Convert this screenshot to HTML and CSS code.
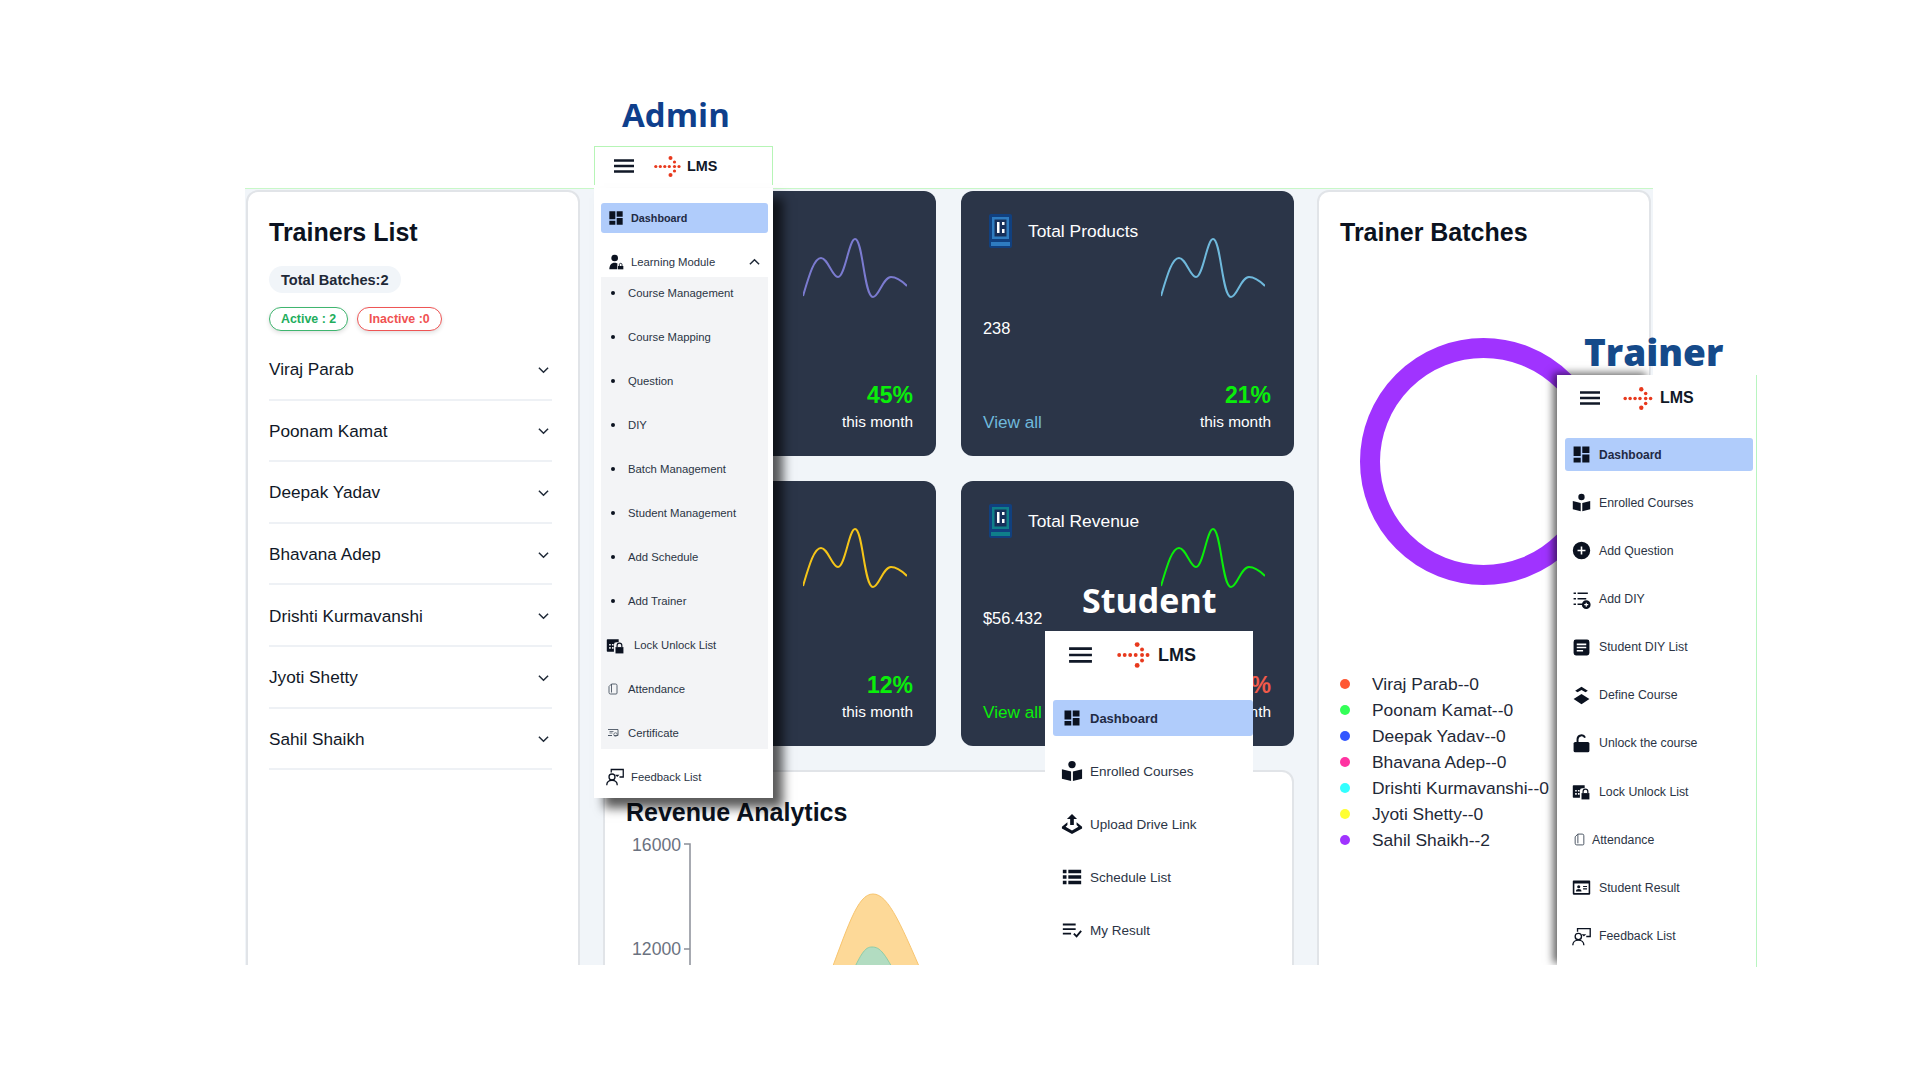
FILE: index.html
```html
<!DOCTYPE html>
<html lang="en">
  <head>
    <meta charset="UTF-8" />
    <title>LMS</title>
    <link rel="stylesheet" href="styles.css">
  </head>
  <body>
    <svg class="defs" width="0" height="0">
      <symbol id="i-dash" viewBox="0 0 24 24"><path d="M2 2h9v12H2zM13 2h9v8h-9zM13 12h9v10h-9zM2 16h9v6H2z"/></symbol>
      <symbol id="i-book" viewBox="0 0 24 24"><circle cx="12" cy="5" r="4"/><path d="M1 10l10 2.500V23L1 20.500zM23 10l-10 2.500V23l10-2.500z"/></symbol>
      <symbol id="i-plus" viewBox="0 0 24 24"><path fill-rule="evenodd" d="M12 1a11 11 0 1 0 0 22 11 11 0 0 0 0-22zM11 7h2v4h4v2h-4v4h-2v-4H7v-2h4z"/></symbol>
      <symbol id="i-listplus" viewBox="0 0 24 24"><path d="M2 3h3v2H2zM7 3h13v2H7zM2 10h3v2H2zM7 10h11v2H7zM2 17h3v2H2zM7 17h6v2H7z"/><path fill-rule="evenodd" d="M18 13a5.500 5.500 0 1 0 0 11 5.500 5.500 0 0 0 0-11zM17.300 16h1.400v1.800h1.800v1.400h-1.800V21h-1.400v-1.800h-1.800v-1.400h1.800z"/></symbol>
      <symbol id="i-note" viewBox="0 0 24 24"><path fill-rule="evenodd" d="M5 2h14a3 3 0 0 1 3 3v14a3 3 0 0 1-3 3H5a3 3 0 0 1-3-3V5a3 3 0 0 1 3-3zM6 7v2h12V7zM6 11v2h12v-2zM6 15v2h8v-2z"/></symbol>
      <symbol id="i-layers" viewBox="0 0 24 24"><path d="M12 1l8 5-3 2-5-3-5 3-3-2zM12 10l10 6.500L12 23 2 16.500z"/></symbol>
      <symbol id="i-unlock" viewBox="0 0 24 24"><path d="M4 10h16a2 2 0 0 1 2 2v9a2 2 0 0 1-2 2H4a2 2 0 0 1-2-2v-9a2 2 0 0 1 2-2z"/><path d="M7 11V6.500a5 5 0 0 1 9.500-2" fill="none" stroke="currentColor" stroke-width="2.500"/></symbol>
      <symbol id="i-callock" viewBox="0 0 24 24"><path fill-rule="evenodd" d="M2 4h14v4h-3a3 3 0 0 0-3 3v9H2a1 1 0 0 1-1-1V5a1 1 0 0 1 1-1zM4 10v2h2v-2zM7.500 10v2h2v-2zM4 14v2h2v-2zM7.500 14v2h2v-2z"/><path d="M12 14h10v8H12z"/><path d="M14 14v-2a3 3 0 0 1 6 0v2" fill="none" stroke="currentColor" stroke-width="1.500"/></symbol>
      <symbol id="i-file" viewBox="0 0 24 24"><path d="M9 2h8a3 3 0 0 1 3 3v15a2 2 0 0 1-2 2H7a3 3 0 0 1-3-3V7zM9 2v17" fill="none" stroke="currentColor" stroke-width="1.800"/></symbol>
      <symbol id="i-cert" viewBox="0 0 24 24"><path d="M2 5h20v12h-8M10 17H2z" fill="none" stroke="currentColor" stroke-width="1.800"/><path d="M5 9h8M5 12h6" stroke="currentColor" stroke-width="1.500"/><circle cx="17" cy="15" r="3.500" fill="none" stroke="currentColor" stroke-width="1.500"/></symbol>
      <symbol id="i-idcard" viewBox="0 0 24 24"><path fill-rule="evenodd" d="M2 3h20a1 1 0 0 1 1 1v16a1 1 0 0 1-1 1H2a1 1 0 0 1-1-1V4a1 1 0 0 1 1-1zM3 7v12h18V7zM8.500 9a2 2 0 1 1 0 4 2 2 0 0 1 0-4zM5 17c0-2 1.500-3 3.500-3s3.500 1 3.500 3zM14 10h5v1.500h-5zM14 13h5v1.500h-5z"/></symbol>
      <symbol id="i-feedback" viewBox="0 0 24 24"><g fill="none" stroke="currentColor" stroke-width="1.700"><circle cx="8" cy="12" r="4"/><path d="M1 23c0-4 3-6.500 7-6.500s7 2.500 7 6.500M7 6V2h16v10h-5"/></g><path d="M12 9h6l-3 3z"/></symbol>
      <symbol id="i-upload" viewBox="0 0 24 24"><path d="M12 1l5.500 5.500H14V13h-4V6.500H6.500z"/><path d="M7 10L1 15v2l11 6 11-6v-2l-6-5v3l2 2-7 4-7-4 2-2z"/></symbol>
      <symbol id="i-rows" viewBox="0 0 24 24"><path d="M2 4h4v4H2zM8 4h14v4H8zM2 10h4v4H2zM8 10h14v4H8zM2 16h4v4H2zM8 16h14v4H8z"/></symbol>
      <symbol id="i-result" viewBox="0 0 24 24"><path d="M2 5h14v2H2zM2 10h14v2H2zM2 15h9v2H2z"/><path d="M14 16l3 3 5-6" fill="none" stroke="currentColor" stroke-width="2"/></symbol>
      <symbol id="i-learn" viewBox="0 0 24 24"><circle cx="10" cy="6" r="5"/><path d="M2 23c0-6 3-10 8-10 2 0 3 .5 4 1v9z"/><path d="M15 18h8v5h-8z"/><path d="M17 18v-2a2 2 0 0 1 4 0v2" fill="none" stroke="currentColor" stroke-width="1.300"/></symbol>
      <symbol id="i-logo" viewBox="0 0 27 21"><g fill="#e8391d"><circle cx="1.800" cy="10.500" r="1.600"/><circle cx="6.300" cy="10.500" r="1.600"/><circle cx="10.800" cy="10.500" r="1.600"/><circle cx="15.300" cy="10.500" r="1.600"/><circle cx="20.500" cy="10.500" r="1.600"/><circle cx="25" cy="10.500" r="1.600"/><circle cx="16.500" cy="2" r="2"/><circle cx="20.500" cy="6" r="1.600"/><circle cx="20.500" cy="15" r="1.600"/><circle cx="16.500" cy="19" r="2"/></g></symbol>
      <symbol id="i-device" viewBox="0 0 23 34"><rect width="23" height="34" rx="2" fill="#11407f"/><rect x="3" y="3" width="17" height="22" fill="currentColor"/><rect x="5.500" y="5.500" width="12" height="17" fill="#17305a"/><path d="M8 8h2.500v11H8zM13 15h2.500v4H13zM13 8h2.500v3H13z" fill="#fff"/><rect x="2" y="28" width="19" height="4" fill="currentColor"/></symbol>
      <symbol id="i-spark" viewBox="0 0 104 60"><path d="M0 58C6 38 11 20 18 20C25 20 29 39 35 39C42 39 46 1 52 1C60 1 61 59 70 59C76 59 80 39 88 39C93 39 99 43 104 48" fill="none" stroke="currentColor" stroke-width="2"/></symbol>
    </svg>

    <div class="stage">
      <div class="dash">
        <section class="panel trainers">
          <h2>Trainers List</h2>
          <div class="total">Total Batches:2</div>
          <div class="chips">
            <span class="chip active">Active : 2</span>
            <span class="chip inactive">Inactive :0</span>
          </div>
          <ul class="accordion">
            <li>Viraj Parab <svg class="chev" viewBox="0 0 12 8"><path d="M1 1.500l5 5 5-5"/></svg></li>
            <li>Poonam Kamat <svg class="chev" viewBox="0 0 12 8"><path d="M1 1.500l5 5 5-5"/></svg></li>
            <li>Deepak Yadav <svg class="chev" viewBox="0 0 12 8"><path d="M1 1.500l5 5 5-5"/></svg></li>
            <li>Bhavana Adep <svg class="chev" viewBox="0 0 12 8"><path d="M1 1.500l5 5 5-5"/></svg></li>
            <li>Drishti Kurmavanshi <svg class="chev" viewBox="0 0 12 8"><path d="M1 1.500l5 5 5-5"/></svg></li>
            <li>Jyoti Shetty <svg class="chev" viewBox="0 0 12 8"><path d="M1 1.500l5 5 5-5"/></svg></li>
            <li>Sahil Shaikh <svg class="chev" viewBox="0 0 12 8"><path d="M1 1.500l5 5 5-5"/></svg></li>
          </ul>
        </section>

        <div class="middle">
          <div class="cards">
            <div class="card">
              <div class="cardTop">
                <div class="cardHead"></div>
                <svg class="spark purple"><use href="#i-spark"/></svg>
              </div>
              <div class="cardBottom">
                <span></span>
                <div class="change"><b class="up">45%</b><span>this month</span></div>
              </div>
            </div>
            <div class="card">
              <div class="cardTop">
                <div class="cardHead"><svg class="device blue"><use href="#i-device"/></svg><span>Total Products</span></div>
                <svg class="spark sky"><use href="#i-spark"/></svg>
              </div>
              <div class="value">238</div>
              <div class="cardBottom">
                <a class="sky">View all</a>
                <div class="change"><b class="up">21%</b><span>this month</span></div>
              </div>
            </div>
            <div class="card">
              <div class="cardTop">
                <div class="cardHead"></div>
                <svg class="spark yellow"><use href="#i-spark"/></svg>
              </div>
              <div class="cardBottom">
                <span></span>
                <div class="change"><b class="up">12%</b><span>this month</span></div>
              </div>
            </div>
            <div class="card">
              <div class="cardTop">
                <div class="cardHead"><svg class="device teal"><use href="#i-device"/></svg><span>Total Revenue</span></div>
                <svg class="spark lime"><use href="#i-spark"/></svg>
              </div>
              <div class="value">$56.432</div>
              <div class="cardBottom">
                <a class="lime">View all</a>
                <div class="change"><b class="down">%</b><span>this month</span></div>
              </div>
            </div>
          </div>

          <section class="panel revenue">
            <h2>Revenue Analytics</h2>
            <svg class="chart" width="670" height="200">
              <path class="areaOrange" d="M215 160C238 100 247 67 263 67C279 67 292 100 318 160Z"/>
              <path class="areaGreen" d="M236 160C251 125 255 120 262 120C270 120 275 125 292 160Z"/>
              <path class="axis" d="M74 17H80V200M74 122H80"/>
              <text x="71" y="24" text-anchor="end">16000</text>
              <text x="71" y="128" text-anchor="end">12000</text>
            </svg>
          </section>
        </div>

        <section class="panel batches">
          <h2>Trainer Batches</h2>
          <div class="donut"></div>
          <ul class="legend">
            <li><i class="dot c1"></i>Viraj Parab--0</li>
            <li><i class="dot c2"></i>Poonam Kamat--0</li>
            <li><i class="dot c3"></i>Deepak Yadav--0</li>
            <li><i class="dot c4"></i>Bhavana Adep--0</li>
            <li><i class="dot c5"></i>Drishti Kurmavanshi--0</li>
            <li><i class="dot c6"></i>Jyoti Shetty--0</li>
            <li><i class="dot c7"></i>Sahil Shaikh--2</li>
          </ul>
        </section>
      </div>

      <div class="label labelAdmin">Admin</div>
      <aside class="side admin">
        <div class="sideHead">
          <svg class="burger" viewBox="0 0 20 14"><path d="M0 1.500h20M0 7h20M0 12.500h20"/></svg>
          <svg class="logo"><use href="#i-logo"/></svg>
          <b>LMS</b>
        </div>
        <a class="item current"><svg class="ico"><use href="#i-dash"/></svg>Dashboard</a>
        <a class="item group"><svg class="ico"><use href="#i-learn"/></svg>Learning Module<svg class="chevUp" viewBox="0 0 12 8"><path d="M1 6.500l5-5 5 5"/></svg></a>
        <div class="sub">
          <a class="item bullet">Course Management</a>
          <a class="item bullet">Course Mapping</a>
          <a class="item bullet">Question</a>
          <a class="item bullet">DIY</a>
          <a class="item bullet">Batch Management</a>
          <a class="item bullet">Student Management</a>
          <a class="item bullet">Add Schedule</a>
          <a class="item bullet">Add Trainer</a>
          <a class="item lockRow"><svg class="ico"><use href="#i-callock"/></svg>Lock Unlock List</a>
          <a class="item smallRow"><svg class="ico"><use href="#i-file"/></svg>Attendance</a>
          <a class="item smallRow"><svg class="ico"><use href="#i-cert"/></svg>Certificate</a>
        </div>
        <a class="item feedback"><svg class="ico"><use href="#i-feedback"/></svg>Feedback List</a>
      </aside>

      <aside class="side student">
        <div class="sideHead">
          <svg class="burger" viewBox="0 0 20 14"><path d="M0 1.500h20M0 7h20M0 12.500h20"/></svg>
          <svg class="logo"><use href="#i-logo"/></svg>
          <b>LMS</b>
        </div>
        <a class="item current"><svg class="ico"><use href="#i-dash"/></svg>Dashboard</a>
        <a class="item"><svg class="ico"><use href="#i-book"/></svg>Enrolled Courses</a>
        <a class="item"><svg class="ico"><use href="#i-upload"/></svg>Upload Drive Link</a>
        <a class="item"><svg class="ico"><use href="#i-rows"/></svg>Schedule List</a>
        <a class="item"><svg class="ico"><use href="#i-result"/></svg>My Result</a>
      </aside>
      <div class="label labelStudent">Student</div>

      <aside class="side trainer">
        <div class="sideHead">
          <svg class="burger" viewBox="0 0 20 14"><path d="M0 1.500h20M0 7h20M0 12.500h20"/></svg>
          <svg class="logo"><use href="#i-logo"/></svg>
          <b>LMS</b>
        </div>
        <a class="item current"><svg class="ico"><use href="#i-dash"/></svg>Dashboard</a>
        <a class="item"><svg class="ico"><use href="#i-book"/></svg>Enrolled Courses</a>
        <a class="item"><svg class="ico"><use href="#i-plus"/></svg>Add Question</a>
        <a class="item"><svg class="ico"><use href="#i-listplus"/></svg>Add DIY</a>
        <a class="item"><svg class="ico"><use href="#i-note"/></svg>Student DIY List</a>
        <a class="item"><svg class="ico"><use href="#i-layers"/></svg>Define Course</a>
        <a class="item"><svg class="ico"><use href="#i-unlock"/></svg>Unlock the course</a>
        <a class="item"><svg class="ico"><use href="#i-callock"/></svg>Lock Unlock List</a>
        <a class="item narrow"><svg class="ico"><use href="#i-file"/></svg>Attendance</a>
        <a class="item"><svg class="ico"><use href="#i-idcard"/></svg>Student Result</a>
        <a class="item"><svg class="ico"><use href="#i-feedback"/></svg>Feedback List</a>
      </aside>
      <div class="label labelTrainer">Trainer</div>
    </div>
  </body>
</html>
```

FILE: styles.css
```css
* {
  box-sizing: border-box;
}

body {
  margin: 0;
  background: #fff;
  font-family: "Liberation Sans", Arial, sans-serif;
  color: #111827;
}

h2 {
  margin: 0;
  font-size: 25px;
  line-height: 30px;
  font-weight: 700;
  color: #0b1220;
}

ul {
  list-style: none;
  margin: 0;
  padding: 0;
}

.defs {
  position: absolute;
}

.stage {
  position: relative;
  width: 1920px;
  height: 1080px;
  overflow: hidden;
}

/* base dashboard */
.dash {
  display: grid;
  grid-template-columns: 334px 691px 334px;
  column-gap: 23px;
  margin: 188px 0 0 245px;
  width: 1408px;
  height: 777px;
  padding: 1px 0 0 1px;
  overflow: hidden;
  background: #f1f5f9;
  border-top: 1px solid #c8f8c8;
}

.panel {
  background: #fff;
  border: 2px solid #e1e4e8;
  border-radius: 12px;
}

.trainers {
  padding: 25px 26px 0 21px;
}

.total {
  display: inline-block;
  margin-top: 19px;
  padding: 0 12px;
  height: 27px;
  line-height: 28px;
  border-radius: 14px;
  background: #f1f5f9;
  font-size: 14.6px;
  font-weight: 700;
  color: #1f2937;
}

.chips {
  display: flex;
  gap: 9px;
  margin-top: 14px;
}

.chip {
  padding: 0 11px;
  height: 24px;
  line-height: 23px;
  border-radius: 12px;
  font-size: 12.4px;
  font-weight: 700;
  background: #fff;
  box-shadow: 0 2px 4px rgba(0, 0, 0, 0.12);
}

.chip.active {
  border: 1px solid #3fb56f;
  color: #22ad5c;
}

.chip.inactive {
  border: 1px solid #ee5555;
  color: #f05252;
}

.accordion {
  margin-top: 8px;
}

.accordion li {
  display: flex;
  align-items: center;
  justify-content: space-between;
  height: 61.6px;
  padding: 2px 3px 0 0;
  border-bottom: 2px solid #eef1f5;
  font-size: 17.2px;
  color: #111827;
}

.chev,
.chevUp {
  width: 11px;
  height: 8px;
  fill: none;
  stroke: #1f2937;
  stroke-width: 1.6;
}

.middle {
  display: flex;
  flex-direction: column;
  gap: 24px;
  padding-top: 1px;
}

.cards {
  display: grid;
  grid-template-columns: 333px 333px;
  grid-template-rows: 265px 265px;
  gap: 25px;
}

.card {
  display: flex;
  flex-direction: column;
  padding: 23px 23px 24px 22px;
  background: #2b3548;
  border-radius: 12px;
  color: #fff;
}

.cardTop {
  display: flex;
  justify-content: space-between;
}

.cardHead {
  display: flex;
  gap: 16px;
  padding-left: 6px;
  font-size: 17.4px;
  line-height: 34px;
}

.device {
  width: 23px;
  height: 34px;
}

.device.blue {
  color: #2f7cc0;
}

.device.teal {
  color: #0f7f8a;
}

.spark {
  width: 104px;
  height: 60px;
  margin: 24px 6px 0 0;
}

.purple { color: #7b7bd0; }
.sky { color: #6fb9dc; }
.yellow { color: #f5c518; }
.lime { color: #0aee0a; }

.value {
  margin-top: 20px;
  font-size: 16.4px;
  line-height: 20px;
}

.cardBottom {
  display: flex;
  justify-content: space-between;
  align-items: flex-end;
  margin-top: auto;
  font-size: 15.4px;
}

.cardBottom a {
  font-size: 17.2px;
  line-height: 20px;
}

.change {
  display: flex;
  flex-direction: column;
  align-items: flex-end;
  gap: 4px;
  line-height: 20px;
}

.change b {
  font-size: 23px;
  line-height: 26px;
}

.up { color: #0aee0a; }
.down { color: #f25a4a; }

.revenue {
  height: 260px;
  padding: 25px 0 0 21px;
}

.chart {
  display: block;
  margin-left: -16px;
}

.chart text {
  font-size: 17.6px;
  fill: #6b7280;
}

.axis {
  fill: none;
  stroke: #8a8f98;
  stroke-width: 1.5;
}

.areaOrange {
  fill: #fdd998;
  stroke: #f8c56f;
}

.areaGreen {
  fill: #b2dcc1;
  stroke: #8fcda8;
}

.batches {
  padding: 25px 0 0 21px;
}

.donut {
  width: 247px;
  height: 247px;
  margin: 91px 0 0 20px;
  border: 20px solid #a033ff;
  border-radius: 50%;
}

.legend {
  margin-top: 86px;
}

.legend li {
  display: flex;
  align-items: center;
  gap: 22px;
  height: 26px;
  font-size: 17.4px;
  color: #1f2937;
}

.dot {
  width: 10px;
  height: 10px;
  border-radius: 50%;
}

.c1 { background: #ff5733; }
.c2 { background: #33ff57; }
.c3 { background: #3357ff; }
.c4 { background: #ff33a1; }
.c5 { background: #33ffff; }
.c6 { background: #ffff33; }
.c7 { background: #a033ff; }

/* floating labels */
.label {
  position: absolute;
  z-index: 2;
  font-family: "Open Sans", sans-serif;
  font-size: 34px;
  line-height: 44px;
  font-weight: 700;
}

.labelAdmin {
  left: 622px;
  top: 93px;
  font-size: 33px;
  color: #0f3f8c;
}

.labelStudent {
  left: 1082px;
  top: 578px;
  color: #fff;
}

.labelTrainer {
  left: 1584px;
  top: 330px;
  font-size: 37px;
  color: #154a8a;
  font-weight: 800;
}

/* floating sidebars */
.side {
  position: absolute;
  z-index: 1;
  display: flex;
  flex-direction: column;
  background: #fff;
}

.side::before {
  content: "";
  position: absolute;
  z-index: -1;
}

.sideHead {
  display: flex;
  align-items: center;
  flex: none;
}

.sideHead b {
  color: #111827;
}

.burger {
  fill: none;
  stroke: #111827;
  stroke-width: 2.4;
}

.item {
  display: flex;
  align-items: center;
  flex: none;
  color: #2b3445;
}

.item.current {
  background: #b0ccfb;
  border-radius: 3px;
  font-weight: 700;
  color: #1f2a44;
}

.ico {
  flex: none;
  fill: currentColor;
}

.item .ico {
  color: #0b1220;
}

/* admin */
.admin {
  left: 594px;
  top: 146px;
  width: 179px;
  height: 652px;
  padding: 0 5px 0 7px;
}

.admin::before {
  top: 42px;
  left: 0;
  right: 0;
  bottom: 0;
  box-shadow: 10px 10px 10px rgba(0, 0, 0, 0.65);
}

.admin .sideHead {
  height: 39px;
  margin: 0 -5px 0 -7px;
  padding-left: 19px;
  border: 1px solid #b6f5b6;
  border-bottom: 0;
}

.admin .burger {
  width: 20px;
  height: 14px;
  margin-right: 20px;
}

.admin .logo {
  width: 27px;
  height: 21px;
  margin-right: 6px;
}

.admin .sideHead b {
  font-size: 14.4px;
}

.admin .item {
  height: 30px;
  padding-left: 7px;
  gap: 7px;
  font-size: 11.3px;
}

.admin .item.current {
  font-size: 10.8px;
}

.admin .ico {
  width: 16px;
  height: 16px;
}

.admin .current {
  margin-top: 18px;
}

.admin .group {
  margin-top: 14px;
}

.chevUp {
  margin-left: auto;
  margin-right: 8px;
}

.sub {
  display: flex;
  flex-direction: column;
  gap: 12px;
  background: #f3f4f6;
}

.sub .item {
  height: 32px;
}

.sub .bullet {
  padding-left: 10px;
  gap: 13px;
}

.sub .bullet::before {
  content: "";
  width: 4px;
  height: 4px;
  border-radius: 50%;
  background: #0b1220;
}

.sub .lockRow {
  padding-left: 5px;
  gap: 9px;
}

.sub .lockRow .ico {
  width: 19px;
  height: 19px;
}

.sub .smallRow {
  padding-left: 6px;
  gap: 9px;
}

.sub .smallRow .ico {
  width: 12px;
  height: 12px;
  color: #4b5563;
}

.admin .feedback {
  height: 32px;
  margin-top: 12px;
  padding-left: 5px;
}

.admin .feedback .ico {
  width: 18px;
  height: 18px;
}

/* student */
.student {
  left: 1045px;
  top: 631px;
  width: 208px;
  height: 334px;
  padding-left: 8px;
  gap: 17px;
}

.student .sideHead {
  height: 48px;
  margin: 0 0 4px -8px;
  padding-left: 24px;
}

.student .burger {
  width: 23px;
  height: 16px;
  margin-right: 25px;
}

.student .logo {
  width: 33px;
  height: 26px;
  margin-right: 8px;
}

.student .sideHead b {
  font-size: 18px;
}

.student .item {
  height: 36px;
  padding-left: 10px;
  gap: 9px;
  font-size: 13.5px;
}

.student .item.current {
  font-size: 13px;
}

.student .ico {
  width: 18px;
  height: 18px;
}

.student .item:nth-child(n+3) {
  padding-left: 8px;
  gap: 7px;
}

.student .item:nth-child(n+3) .ico {
  width: 22px;
  height: 22px;
}

/* trainer */
.trainer {
  left: 1557px;
  top: 375px;
  width: 200px;
  height: 592px;
  padding: 0 3px 0 8px;
  gap: 15.15px;
  border-right: 1px solid #b8f5c0;
}

.trainer::before {
  top: 0;
  left: 0;
  width: 93px;
  bottom: 2px;
  box-shadow: -4px -2px 8px rgba(0, 0, 0, 0.6);
  clip-path: inset(-20px 0 0 -20px);
}

.trainer .sideHead {
  height: 46px;
  margin: 0 0 4px -8px;
  padding-left: 23px;
}

.trainer .burger {
  width: 20px;
  height: 14px;
  margin-right: 23px;
}

.trainer .logo {
  width: 30px;
  height: 23px;
  margin-right: 7px;
}

.trainer .sideHead b {
  font-size: 16px;
}

.trainer .item {
  height: 33px;
  padding-left: 7px;
  gap: 8px;
  font-size: 12.3px;
}

.trainer .item.current {
  font-size: 12px;
  margin-top: -2px;
}

.trainer .ico {
  width: 19px;
  height: 19px;
}

.trainer .narrow {
  padding-left: 8px;
  gap: 6px;
}

.trainer .narrow .ico {
  width: 13px;
  height: 13px;
  color: #4b5563;
}
```
